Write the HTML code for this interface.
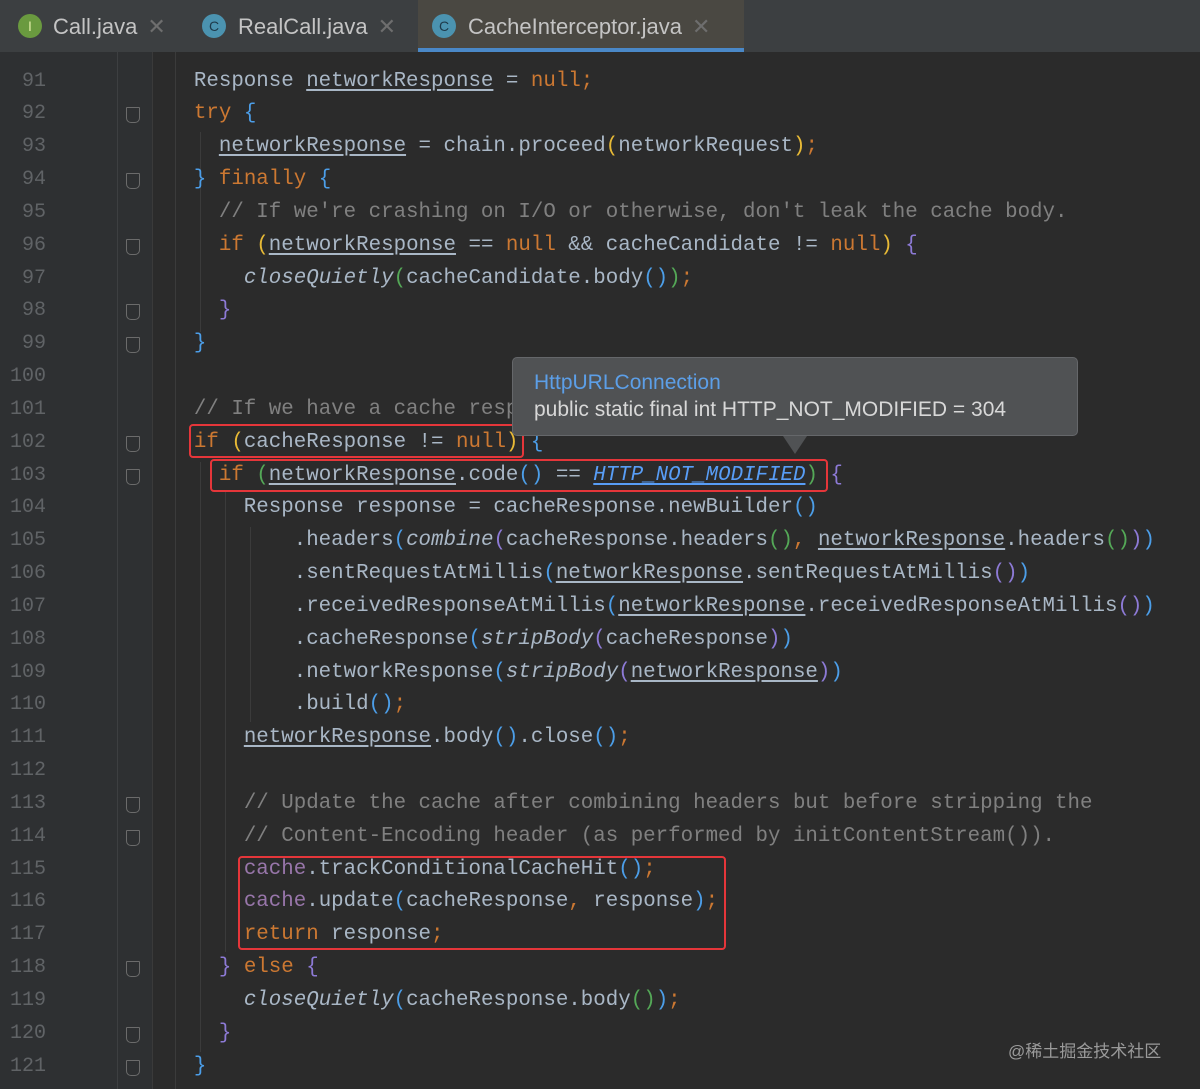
<!DOCTYPE html>
<html><head><meta charset="utf-8"><style>
body{margin:0;width:1200px;height:1089px;overflow:hidden;background:#2b2b2b;font-family:"Liberation Mono",monospace;position:relative}
#tabs{position:absolute;left:0;top:0;width:1200px;height:52px;background:#3c3f41;font-family:"Liberation Sans",sans-serif;font-size:22px;color:#c4c4c4}
.tab{position:absolute;top:0;height:52px;line-height:54px}
.ico{position:absolute;top:14px;width:24px;height:24px;border-radius:50%;font-size:14px;line-height:24px;text-align:center;color:#1e3a4a}
.x{color:#6e6e6e;margin-left:10px}
#gut{position:absolute;left:0;top:52px;width:152px;height:1037px;background:#2e3032}
.vl{position:absolute;top:52px;height:1037px;width:1px}
.ln{position:absolute;left:0;width:46px;text-align:right;color:#606366;font-size:20px}
.code{position:absolute;left:0;white-space:pre;font-size:20.8px;color:#a9b7c6}
.k{color:#cc7832}.c{color:#808080}.u{text-decoration:underline;text-underline-offset:3px}.i{font-style:italic}
.y{color:#e8ba36}.b{color:#4c9ee8}.p{color:#8d7ad6}.g{color:#54a857}
.fold{position:absolute;left:126px;width:12px;height:14px;border:1px solid #6b6b6b;border-radius:1px 1px 5px 5px}
.box{position:absolute;border:2px solid #e5363a;border-radius:4px}
.guide{position:absolute;width:1px;background:#3b3b3b}
</style></head><body>
<div id="gut"></div>
<div class="vl" style="left:117px;background:#3d3f41"></div>
<div class="vl" style="left:152px;background:#3a3a3a"></div>
<div class="guide" style="left:175px;top:52px;height:1037px"></div>
<div class="guide" style="left:200px;top:132px;height:200px"></div>
<div class="guide" style="left:200px;top:462px;height:590px"></div>
<div class="guide" style="left:225px;top:492px;height:460px"></div>
<div class="guide" style="left:250px;top:527px;height:195px"></div>

<div id="tabs">
<div class="tab" style="left:18px"><span class="ico" style="left:0;background:#6a9a3f;color:#d9e8a0">I</span><span style="margin-left:35px">Call.java</span><span class="x">✕</span></div>
<div class="tab" style="left:202px"><span class="ico" style="left:0;background:#4b93b0">C</span><span style="margin-left:36px">RealCall.java</span><span class="x">✕</span></div>
<div class="tab" style="left:418px;width:326px;background:#4a4842"><span class="ico" style="left:14px;background:#4b93b0">C</span><span style="margin-left:50px">CacheInterceptor.java</span><span class="x">✕</span><div style="position:absolute;left:0;bottom:0;width:326px;height:4px;background:#4a88c7"></div></div>
</div>

<div id="lines"></div>
<script>
var L=[
[91,'      Response <span class="u">networkResponse</span> = <span class="k">null;</span>'],
[92,'      <span class="k">try</span> <span class="b">{</span>',1],
[93,'        <span class="u">networkResponse</span> = chain.proceed<span class="y">(</span>networkRequest<span class="y">)</span><span class="k">;</span>'],
[94,'      <span class="b">}</span> <span class="k">finally</span> <span class="b">{</span>',2],
[95,'        <span class="c">// If we\'re crashing on I/O or otherwise, don\'t leak the cache body.</span>'],
[96,'        <span class="k">if</span> <span class="y">(</span><span class="u">networkResponse</span> == <span class="k">null</span> && cacheCandidate != <span class="k">null</span><span class="y">)</span> <span class="p">{</span>',1],
[97,'          <span class="i">closeQuietly</span><span class="g">(</span>cacheCandidate.body<span class="b">()</span><span class="g">)</span><span class="k">;</span>'],
[98,'        <span class="p">}</span>',2],
[99,'      <span class="b">}</span>',2],
[100,''],
[101,'      <span class="c">// If we have a cache response</span>'],
[102,'      <span class="k">if</span> <span class="y">(</span>cacheResponse != <span class="k">null</span><span class="y">)</span> <span class="b">{</span>',1],
[103,'        <span class="k">if</span> <span class="g">(</span><span class="u">networkResponse</span>.code<span class="b">()</span> == <span class="u i" style="color:#589df6">HTTP_NOT_MODIFIED</span><span class="g">)</span> <span class="p">{</span>',1],
[104,'          Response response = cacheResponse.newBuilder<span class="b">()</span>'],
[105,'              .headers<span class="b">(</span><span class="i">combine</span><span class="p">(</span>cacheResponse.headers<span class="g">()</span><span class="k">,</span> <span class="u">networkResponse</span>.headers<span class="g">()</span><span class="p">)</span><span class="b">)</span>'],
[106,'              .sentRequestAtMillis<span class="b">(</span><span class="u">networkResponse</span>.sentRequestAtMillis<span class="p">()</span><span class="b">)</span>'],
[107,'              .receivedResponseAtMillis<span class="b">(</span><span class="u">networkResponse</span>.receivedResponseAtMillis<span class="p">()</span><span class="b">)</span>'],
[108,'              .cacheResponse<span class="b">(</span><span class="i">stripBody</span><span class="p">(</span>cacheResponse<span class="p">)</span><span class="b">)</span>'],
[109,'              .networkResponse<span class="b">(</span><span class="i">stripBody</span><span class="p">(</span><span class="u">networkResponse</span><span class="p">)</span><span class="b">)</span>'],
[110,'              .build<span class="b">()</span><span class="k">;</span>'],
[111,'          <span class="u">networkResponse</span>.body<span class="b">()</span>.close<span class="b">()</span><span class="k">;</span>'],
[112,''],
[113,'          <span class="c">// Update the cache after combining headers but before stripping the</span>',1],
[114,'          <span class="c">// Content-Encoding header (as performed by initContentStream()).</span>',2],
[115,'          <span style="color:#9876aa">cache</span>.trackConditionalCacheHit<span class="b">()</span><span class="k">;</span>'],
[116,'          <span style="color:#9876aa">cache</span>.update<span class="b">(</span>cacheResponse<span class="k">,</span> response<span class="b">)</span><span class="k">;</span>'],
[117,'          <span class="k">return</span> response<span class="k">;</span>'],
[118,'        <span class="p">}</span> <span class="k">else</span> <span class="p">{</span>',1],
[119,'          <span class="i">closeQuietly</span><span class="b">(</span>cacheResponse.body<span class="g">()</span><span class="b">)</span><span class="k">;</span>'],
[120,'        <span class="p">}</span>',2],
[121,'      <span class="b">}</span>',2]
];
var h='',lh=32.83;
for(var j=0;j<L.length;j++){var t=65.6+lh*j;
h+='<div class="ln" style="top:'+t+'px;line-height:'+lh+'px">'+L[j][0]+'</div>';
h+='<div class="code" style="left:119px;top:'+t+'px;line-height:'+lh+'px">'+L[j][1]+'</div>';
if(L[j][2])h+='<div class="fold" style="top:'+(t+9)+'px"></div>';}
document.getElementById('lines').innerHTML=h;
</script>
<div class="box" style="left:189px;top:424px;width:331px;height:30px"></div>
<div class="box" style="left:210px;top:459px;width:614px;height:29px"></div>
<div class="box" style="left:238px;top:856px;width:484px;height:90px"></div>
<div style="position:absolute;left:512px;top:357px;width:566px;height:79px;background:#505254;border:1px solid #65676a;border-radius:5px;font-family:'Liberation Sans',sans-serif;font-size:21px;line-height:27px;color:#d8d8d8;box-sizing:border-box;padding:11px 0 0 21px">
<div style="color:#5c9fe8">HttpURLConnection</div>
<div>public static final int HTTP_NOT_MODIFIED = 304</div>
</div>
<div style="position:absolute;left:783px;top:436px;width:0;height:0;border-left:12px solid transparent;border-right:12px solid transparent;border-top:18px solid #505254"></div>
<div style="position:absolute;left:1008px;top:1037px;font-family:'Liberation Sans','Noto Sans CJK SC',sans-serif;font-size:17px;color:#9a9a9a">@稀土掘金技术社区</div>
</body></html>
